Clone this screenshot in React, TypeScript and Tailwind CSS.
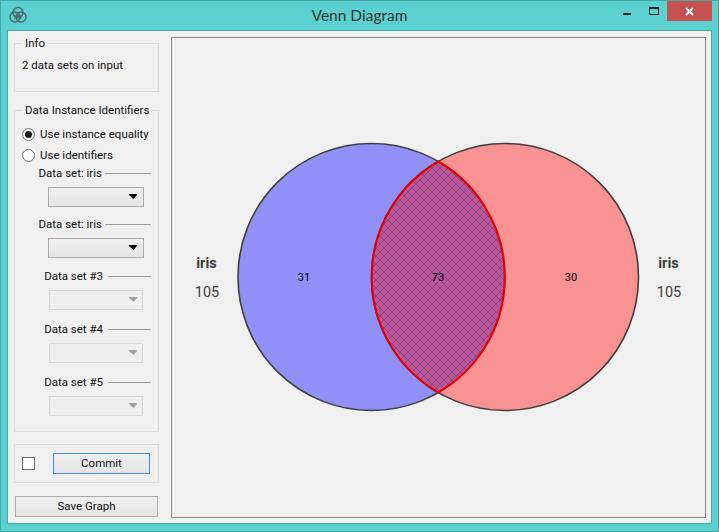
const Combo = ({ disabled }: { disabled?: boolean }) => (
  <div className="flex justify-end">
    <div
      className={
        disabled
          ? "mr-[15px] flex h-[20px] w-[94px] items-center justify-end border border-[#d9d9d9] bg-[#efefef] pr-[4px]"
          : "mr-[14px] flex h-[20px] w-[96px] items-center justify-end border border-[#acacac] bg-gradient-to-b from-[#f0f0f0] to-[#e5e5e5] pr-[5px]"
      }
    >
      <svg width="9" height="6" viewBox="0 0 9 6">
        <path d="M0 0h8v1L4.500 5 0 1z" fill={disabled ? "#a0a0a0" : "#000000"} />
      </svg>
    </div>
  </div>
);

const DataSet = ({ label, disabled, className }: { label: string; disabled?: boolean; className: string }) => (
  <div className={className}>
    <div className="flex h-[16px] items-center justify-end pr-[7px]">
      <span className="leading-4">{label}</span>
      <span className={disabled ? "ml-[5px] h-[1px] w-[43px] bg-[#a0a0a0]" : "ml-[3px] h-[1px] w-[46px] bg-[#a0a0a0]"} />
    </div>
    <div className="mt-[6px]">
      <Combo disabled={disabled} />
    </div>
  </div>
);

const Radio = ({ label, checked }: { label: string; checked?: boolean }) => (
  <div className="flex h-[21px] items-center gap-[5px]">
    <span className="flex h-[13px] w-[13px] items-center justify-center rounded-full border border-[#707070] bg-white">
      {checked && <span className="h-[7px] w-[7px] rounded-full bg-[#1a1a1a]" />}
    </span>
    <span>{label}</span>
  </div>
);

const Venn = () => (
  <svg width="532" height="479" viewBox="172 38 532 479" className="block">
    <defs>
      <pattern id="hatch" width="8" height="8" patternUnits="userSpaceOnUse">
        <rect width="8" height="8" fill="#c0559a" />
        <path
          d="M0 0h1v1H0zM7 0h1v1H7zM1 1h1v1H1zM6 1h1v1H6zM2 2h1v1H2zM5 2h1v1H5zM3 3h2v2H3zM2 5h1v1H2zM5 5h1v1H5zM1 6h1v1H1zM6 6h1v1H6zM0 7h1v1H0zM7 7h1v1H7z"
          fill="#7d4a85"
          shapeRendering="crispEdges"
        />
      </pattern>
      <clipPath id="leftClip">
        <circle cx="371.500" cy="277" r="133.5" />
      </clipPath>
    </defs>
    <circle cx="371.500" cy="277" r="133.5" fill="#9090f8" stroke="#404040" strokeWidth="1.6" />
    <circle cx="505" cy="277" r="133.5" fill="#f99393" stroke="#404040" strokeWidth="1.6" />
    <circle cx="505" cy="277" r="133.5" fill="url(#hatch)" clipPath="url(#leftClip)" />
    <path
      d="M438.250 161.500 A133.500 133.500 0 0 1 438.250 392.500 A133.500 133.500 0 0 1 438.250 161.500Z"
      fill="none"
      stroke="#e60000"
      strokeWidth="2.200"
    />
    <g fontSize="11" fill="#000000" textAnchor="middle">
      <text x="304" y="281">31</text>
      <text x="438" y="281">73</text>
      <text x="571" y="281">30</text>
    </g>
    <g fill="#3c3c3c" textAnchor="middle" fontSize="14.500">
      <text x="206.500" y="268" fontWeight="700">iris</text>
      <text x="207" y="297">105</text>
      <text x="668.500" y="268" fontWeight="700">iris</text>
      <text x="669" y="297">105</text>
    </g>
  </svg>
);

export default function App() {
  return (
    <div className="flex h-[532px] w-[719px] flex-col border border-[#45a9a9] bg-[#5bd0d0] font-['Roboto','Lato',sans-serif] text-[11.500px] text-[#101010]">
      <div className="grid h-[29px] grid-cols-[1fr_auto_1fr]">
        <div className="flex items-center">
          <svg width="20" height="20" viewBox="0 0 20 20" className="ml-[7px] mb-[1px]" fill="none" stroke="#4a6a6c" strokeWidth="1.400">
            <circle cx="10" cy="7.500" r="5" />
            <circle cx="7" cy="12" r="5" />
            <circle cx="13" cy="12" r="5" />
            <path d="M10 8l2.800 4.500H7.200z" fill="#4a6a6c" />
          </svg>
        </div>
        <div className="self-center font-['Lato',sans-serif] text-[15.500px] text-[#333333]">Venn Diagram</div>
        <div className="flex items-start justify-end pr-[6px]">
          <span className="mr-[18px] mt-[12px] h-[2px] w-[8px] bg-[#222222]" />
          <span className="mr-[8px] mt-[6px] h-[8px] w-[10px] border border-t-2 border-[#222222]" />
          <span className="flex h-[20px] w-[45px] items-center justify-center bg-[#c75050] text-white">
            <svg width="9" height="9" viewBox="0 0 9 9" stroke="#ffffff" strokeWidth="2">
              <path d="M1 1l7 7M8 1l-7 7" />
            </svg>
          </span>
        </div>
      </div>
      <div className="mx-[6px] flex flex-1 gap-[12px] border border-[#45a9a9] bg-[#f0f0f0] pl-[6px] pr-[5px] pt-[4px]">
        <div className="flex w-[145px] flex-col">
          <fieldset className="h-[57px] min-w-0 border border-[#dcdcdc] pl-[7px]">
            <legend className="whitespace-nowrap px-[3px] leading-4">Info</legend>
            <div className="mt-[6px] leading-4">2 data sets on input</div>
          </fieldset>
          <fieldset className="mt-[10px] h-[330px] min-w-0 border border-[#dcdcdc] pl-[7px]">
            <legend className="whitespace-nowrap px-[3px] leading-4">Data Instance Identifiers</legend>
            <div className="mt-[6px]">
              <Radio label="Use instance equality" checked />
              <Radio label="Use identifiers" />
              <div className="mt-[-3px]">
                <DataSet label="Data set: iris" className="h-[51px] pt-[2px]" />
                <DataSet label="Data set: iris" className="h-[52px] pt-[2px]" />
                <DataSet label="Data set #3" disabled className="h-[53px] pt-[2px]" />
                <DataSet label="Data set #4" disabled className="h-[53px] pt-[2px]" />
                <DataSet label="Data set #5" disabled className="h-[53px] pt-[2px]" />
              </div>
            </div>
          </fieldset>
          <div className="mt-[12px] flex h-[39px] items-center border border-[#dcdcdc] pl-[7px]">
            <span className="h-[13px] w-[13px] border border-[#707070] bg-white" />
            <button className="ml-[18px] h-[21px] w-[97px] border border-[#3f8fe0] bg-gradient-to-b from-[#f0f0f0] to-[#e5e5e5] pt-[1px]">
              Commit
            </button>
          </div>
          <button className="ml-[1px] mt-[13px] h-[21px] w-[143px] border border-[#acacac] bg-gradient-to-b from-[#f0f0f0] to-[#e5e5e5] pt-[1px]">
            Save Graph
          </button>
        </div>
        <div className="mt-[2px] h-[481px] flex-1 border border-[#8a8a8a]">
          <Venn />
        </div>
      </div>
      <div className="h-[7px]" />
    </div>
  );
}
